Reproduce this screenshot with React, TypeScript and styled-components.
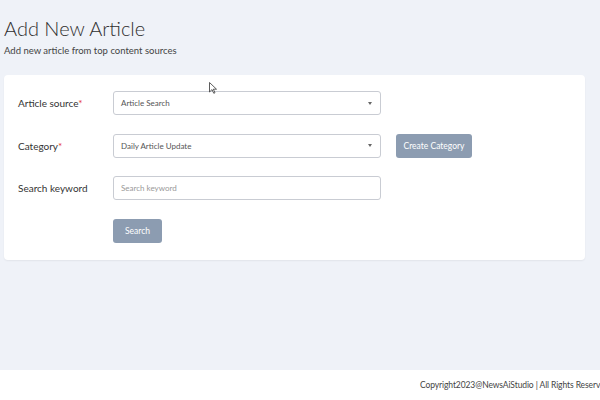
import React from 'react'
import styled, { createGlobalStyle } from 'styled-components'

const GlobalStyle = createGlobalStyle`
	html, body {
		margin: 0;
		padding: 0;
		background: #eff2f8;
		font-family: Lato, 'Noto Sans', sans-serif;
		color: #333;
	}
	* { box-sizing: border-box; }
`

const Page = styled.div`
	width: 600px;
	height: 400px;
	display: flex;
	flex-direction: column;
	overflow: hidden;
	position: relative;
`

const Main = styled.div`
	flex: 1;
	padding: 16px 15px 0 4px;
`

const Title = styled.h1`
	margin: 0;
	font-size: 20px;
	font-weight: 300;
	color: #2f2f2f;
	line-height: 24px;
`

const Subtitle = styled.p`
	margin: 5px 0 0;
	font-size: 9.5px;
	color: #444;
`

const Card = styled.div`
	margin-top: 19px;
	background: #fff;
	border-radius: 4px;
	box-shadow: 0 1px 2px rgba(0, 0, 0, 0.06);
	padding: 16px 0 17px 14px;
	display: flex;
	flex-direction: column;
	gap: 18.5px;
`

const Row = styled.div`
	display: flex;
	align-items: center;
`

const Label = styled.div`
	width: 95px;
	font-size: 10px;
	color: #333;
`

const Star = styled.span`
	color: #e53935;
`

const Field = styled.div<{ $muted?: boolean }>`
	width: 268px;
	height: 24px;
	border: 1px solid #c9ccd3;
	border-radius: 3px;
	display: flex;
	align-items: center;
	justify-content: space-between;
	padding: 0 8px 0 7px;
	font-size: 8px;
	color: ${p => (p.$muted ? '#999' : '#555')};
`

const Caret = styled.span`
	width: 0;
	height: 0;
	border-left: 2px solid transparent;
	border-right: 2px solid transparent;
	border-top: 3px solid #666;
`

const Button = styled.div<{ $width: number }>`
	width: ${p => p.$width}px;
	height: 24px;
	background: #8c9cb1;
	border-radius: 3px;
	color: #fff;
	font-size: 8.5px;
	display: flex;
	align-items: center;
	justify-content: center;
`

const Spacer = styled.div`
	width: 15px;
`

const Footer = styled.div`
	height: 30px;
	background: #fff;
	display: flex;
	align-items: center;
	justify-content: flex-start;
	padding-left: 420px;
	font-size: 8.5px;
	letter-spacing: -0.1px;
	color: #444;
	white-space: nowrap;
	overflow: hidden;
`

const Cursor = styled.svg`
	position: absolute;
	left: 209px;
	top: 82px;
`

export default function App() {
	return (
		<Page>
			<GlobalStyle />
			<Main>
				<Title>Add New Article</Title>
				<Subtitle>Add new article from top content sources</Subtitle>
				<Card>
					<Row>
						<Label>
							Article source<Star>*</Star>
						</Label>
						<Field>
							Article Search
							<Caret />
						</Field>
					</Row>
					<Row>
						<Label>
							Category<Star>*</Star>
						</Label>
						<Field>
							Daily Article Update
							<Caret />
						</Field>
						<Spacer />
						<Button $width={76}>Create Category</Button>
					</Row>
					<Row>
						<Label>Search keyword</Label>
						<Field $muted>Search keyword</Field>
					</Row>
					<Row>
						<Label />
						<Button $width={49}>Search</Button>
					</Row>
				</Card>
			</Main>
			<Footer>Copyright2023@NewsAiStudio | All Rights Reserved</Footer>
			<Cursor width="8" height="12" viewBox="0 0 8 12">
				<path d="M0.5 0.5 L0.5 10 L3 7.6 L4.8 11.3 L6 10.7 L4.3 7.2 L7.5 7.2 Z" fill="#fff" stroke="#333" strokeWidth="0.8" />
			</Cursor>
		</Page>
	)
}
